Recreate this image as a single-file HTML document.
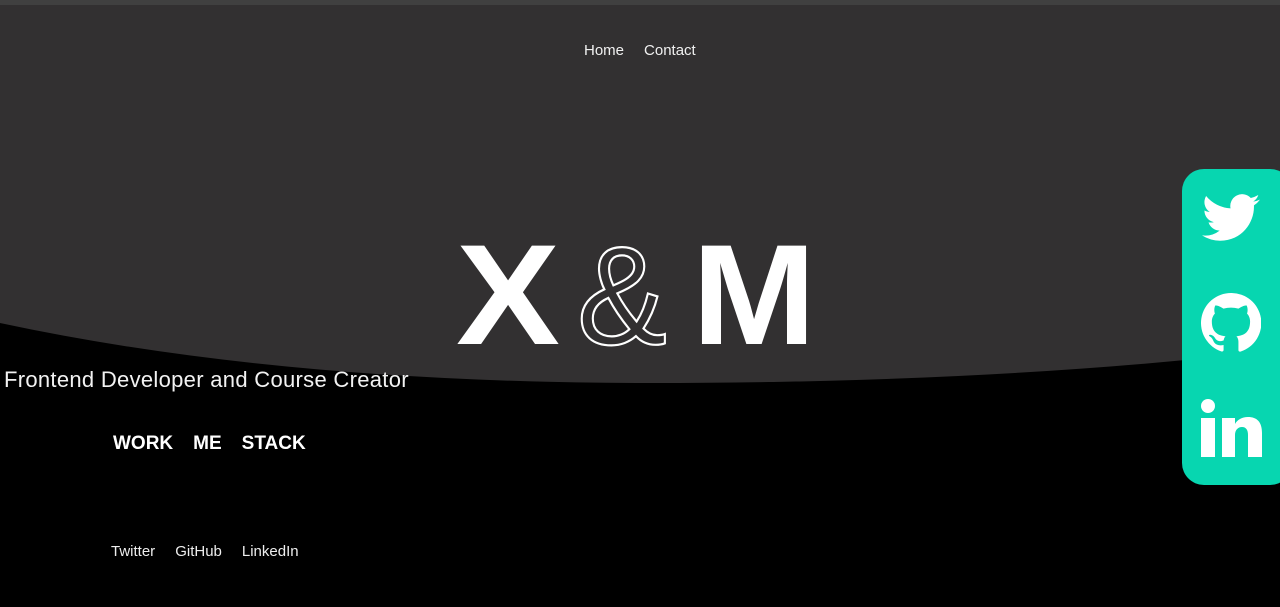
<!DOCTYPE html>
<html><head><meta charset="utf-8"><style>
*{margin:0;padding:0;box-sizing:border-box}
html,body{width:1280px;height:607px;overflow:hidden;background:#000;font-family:"Liberation Sans",sans-serif;color:#fff}
.top{position:absolute;left:0;top:0;width:1280px;height:5px;background:#404040}
svg.bg{position:absolute;left:0;top:0}
.nav{position:absolute;top:42px;left:584px;font-size:15px;color:#f0f0f0}
.nav span{margin-right:20px}
.title{position:absolute;left:455px;top:228px;width:365px;height:130px;overflow:visible}
.sub{position:absolute;left:4px;top:367px;font-size:22px;letter-spacing:.3px;color:#f2f2f2}
.menu{position:absolute;left:113px;top:433px;font-size:19px;font-weight:bold}
.menu span{margin-right:20px}
.links{position:absolute;left:111px;top:543px;font-size:15px;color:#eee}
.links span{margin-right:20px}
.panel{position:absolute;left:1182px;top:169px;width:110px;height:316px;background:#07d6b0;border-radius:22px}
</style></head><body>
<svg class="bg" width="1280" height="607"><path d="M0 5H1280V350Q1000 383 650 383Q280 383 0 323Z" fill="#323031"/></svg>
<div class="top"></div>
<div class="nav"><span>Home</span><span>Contact</span></div>
<svg class="title" viewBox="0 0 365 130">
<text x="1" y="116" font-family="Liberation Sans" font-weight="bold" font-size="143" fill="#fff" textLength="104" lengthAdjust="spacingAndGlyphs">X</text>
<text x="122" y="116" font-family="Liberation Sans" font-size="140" fill="none" stroke="#fff" stroke-width="2.2" textLength="90" lengthAdjust="spacingAndGlyphs">&amp;</text>
<text x="237" y="116" font-family="Liberation Sans" font-weight="bold" font-size="143" fill="#fff" textLength="124" lengthAdjust="spacingAndGlyphs">M</text>
</svg>
<div class="sub">Frontend Developer and Course Creator</div>
<div class="menu"><span>WORK</span><span>ME</span><span>STACK</span></div>
<div class="links"><span>Twitter</span><span>GitHub</span><span>LinkedIn</span></div>
<div class="panel">
<svg style="position:absolute;left:20px;top:24px" width="58" height="50" viewBox="0 0 24 20"><path fill="#fff" d="M24 2.4a9.8 9.8 0 0 1-2.8.8A4.9 4.9 0 0 0 23.3.5a9.8 9.8 0 0 1-3.1 1.2A4.9 4.9 0 0 0 11.8 6 14 14 0 0 1 1.7.9a4.9 4.9 0 0 0 1.5 6.6A4.9 4.9 0 0 1 1 6.9a4.9 4.9 0 0 0 3.9 4.8 4.9 4.9 0 0 1-2.2.1 4.9 4.9 0 0 0 4.6 3.4A9.9 9.9 0 0 1 0 17.2 14 14 0 0 0 7.5 19.4c9.1 0 14-7.5 14-14v-.6A10 10 0 0 0 24 2.4z"/></svg>
<svg style="position:absolute;left:19px;top:124px" width="60" height="60" viewBox="0 0 16 16"><path fill="#fff" d="M8 0a8 8 0 0 0-2.53 15.59c.4.07.55-.17.55-.38v-1.34c-2.23.48-2.7-1.07-2.7-1.07-.36-.93-.89-1.17-.89-1.17-.73-.5.05-.49.05-.49.8.06 1.23.83 1.23.83.71 1.23 1.87.87 2.33.66.07-.52.28-.87.5-1.07-1.78-.2-3.65-.89-3.65-3.95 0-.87.31-1.59.82-2.15-.08-.2-.36-1.02.08-2.12 0 0 .67-.21 2.2.82a7.6 7.6 0 0 1 4 0c1.53-1.03 2.2-.82 2.2-.82.44 1.1.16 1.92.08 2.12.51.56.82 1.27.82 2.15 0 3.07-1.87 3.75-3.65 3.95.29.25.54.73.54 1.48v2.2c0 .21.15.46.55.38A8 8 0 0 0 8 0z"/></svg>
<svg style="position:absolute;left:18px;top:230px" width="62" height="58" viewBox="0 0 62 58"><circle cx="8" cy="7" r="7" fill="#fff"/><rect x="1" y="19" width="14" height="39" fill="#fff"/><path fill="#fff" d="M22 19h13v6c2-4 7-7 13-7 9 0 14 5 14 16v24H48V36c0-5-2-8-6-8s-7 3-7 8v22H22Z"/></svg>
</div>
</body></html>
